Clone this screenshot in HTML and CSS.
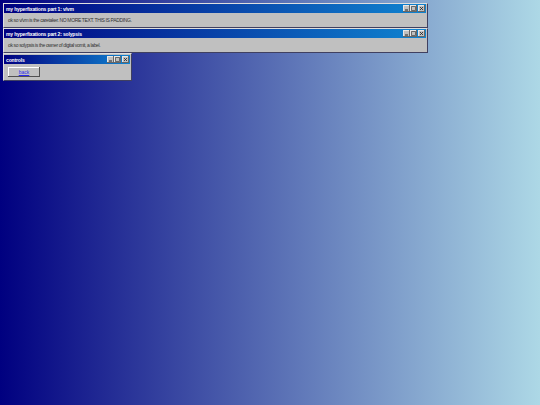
FILE: index.html
```html
<!DOCTYPE html>
<html lang="en">
<head>
    <meta charset="UTF-8">
    <meta name="viewport" content="width=device-width, initial-scale=1.0">
    <title>my hyperfixations</title>
    <link rel="stylesheet" href="styles.css">
</head>
<body>
    <div class="window window-wide">
        <div class="title-bar">
            <span class="title-text">my hyperfixations part 1: v/vm</span>
            <div class="title-buttons">
                <button class="title-btn"><svg viewBox="0 0 5 5"><path d="M1 4h3" stroke="#222" fill="none"/></svg></button>
                <button class="title-btn"><svg viewBox="0 0 5 5"><path d="M.5 1v3.5h4v-4h-4z" stroke="#444" stroke-width=".7" fill="none"/></svg></button>
                <button class="title-btn close-gap"><svg viewBox="0 0 5 5"><path d="M1 1l3 3M4 1l-3 3" stroke="#222" stroke-width=".8" fill="none"/></svg></button>
            </div>
        </div>
        <div class="window-body">ok so v/vm is the caretaker. NO MORE TEXT. THIS IS PADDING.</div>
    </div>

    <div class="window window-wide">
        <div class="title-bar">
            <span class="title-text">my hyperfixations part 2: solypsis</span>
            <div class="title-buttons">
                <button class="title-btn"><svg viewBox="0 0 5 5"><path d="M1 4h3" stroke="#222" fill="none"/></svg></button>
                <button class="title-btn"><svg viewBox="0 0 5 5"><path d="M.5 1v3.5h4v-4h-4z" stroke="#444" stroke-width=".7" fill="none"/></svg></button>
                <button class="title-btn close-gap"><svg viewBox="0 0 5 5"><path d="M1 1l3 3M4 1l-3 3" stroke="#222" stroke-width=".8" fill="none"/></svg></button>
            </div>
        </div>
        <div class="window-body">ok so solypsis is the owner of digital vomit, a label.</div>
    </div>

    <div class="window window-small">
        <div class="title-bar">
            <span class="title-text">controls</span>
            <div class="title-buttons">
                <button class="title-btn"><svg viewBox="0 0 5 5"><path d="M1 4h3" stroke="#222" fill="none"/></svg></button>
                <button class="title-btn"><svg viewBox="0 0 5 5"><path d="M.5 1v3.5h4v-4h-4z" stroke="#444" stroke-width=".7" fill="none"/></svg></button>
                <button class="title-btn close-gap"><svg viewBox="0 0 5 5"><path d="M1 1l3 3M4 1l-3 3" stroke="#222" stroke-width=".8" fill="none"/></svg></button>
            </div>
        </div>
        <div class="controls-body">
            <a class="back-btn" href="#">back</a>
        </div>
    </div>
</body>
</html>
```

FILE: styles.css
```css
html, body {
    height: 100%;
}
body {
    margin: 0;
    padding: 3px;
    box-sizing: border-box;
    background: linear-gradient(to right, #000080, #add8e6);
    font-family: "Liberation Sans", Arial, sans-serif;
    display: flex;
    flex-direction: column;
    align-items: flex-start;
}
.window {
    background: #c0c0c0;
    padding: 0 1px 1px 0;
    border: 1px solid;
    border-color: #dfdfdf #404060 #404060 #dfdfdf;
    box-sizing: border-box;
}
.window-wide {
    width: 425px;
    height: 25px;
}
.window-small {
    width: 129px;
    height: 28px;
    padding-top: 1px;
}
.title-bar {
    height: 9px;
    background: linear-gradient(to right, #000080, #1084d0);
    display: flex;
    justify-content: space-between;
    align-items: center;
    padding: 0 1px 0 2px;
}
.title-text {
    color: #fff;
    font-size: 5px;
    font-weight: bold;
    letter-spacing: -0.15px;
    white-space: nowrap;
}
.title-buttons {
    display: flex;
}
.title-btn {
    width: 7px;
    height: 7px;
    padding: 0;
    background: #c0c0c0;
    border: none;
    box-shadow: inset -1px -1px #666, inset 1px 1px #e8e8e8;
    display: flex;
}
.title-btn svg {
    width: 5px;
    height: 5px;
    margin: 1px;
}
.close-gap {
    margin-left: 1px;
}
.window-body {
    font-size: 5px;
    letter-spacing: -0.36px;
    color: #333;
    padding: 4px 4px;
    white-space: nowrap;
}
.controls-body {
    padding: 3px 4px;
    font-size: 5px;
}
.back-btn {
    display: flex;
    justify-content: center;
    align-items: center;
    width: 32px;
    height: 10px;
    box-sizing: border-box;
    background: #c0c0c0;
    color: #2a2aee;
    box-shadow: inset -1px -1px #505050, inset 1px 1px #fff;
}
```
